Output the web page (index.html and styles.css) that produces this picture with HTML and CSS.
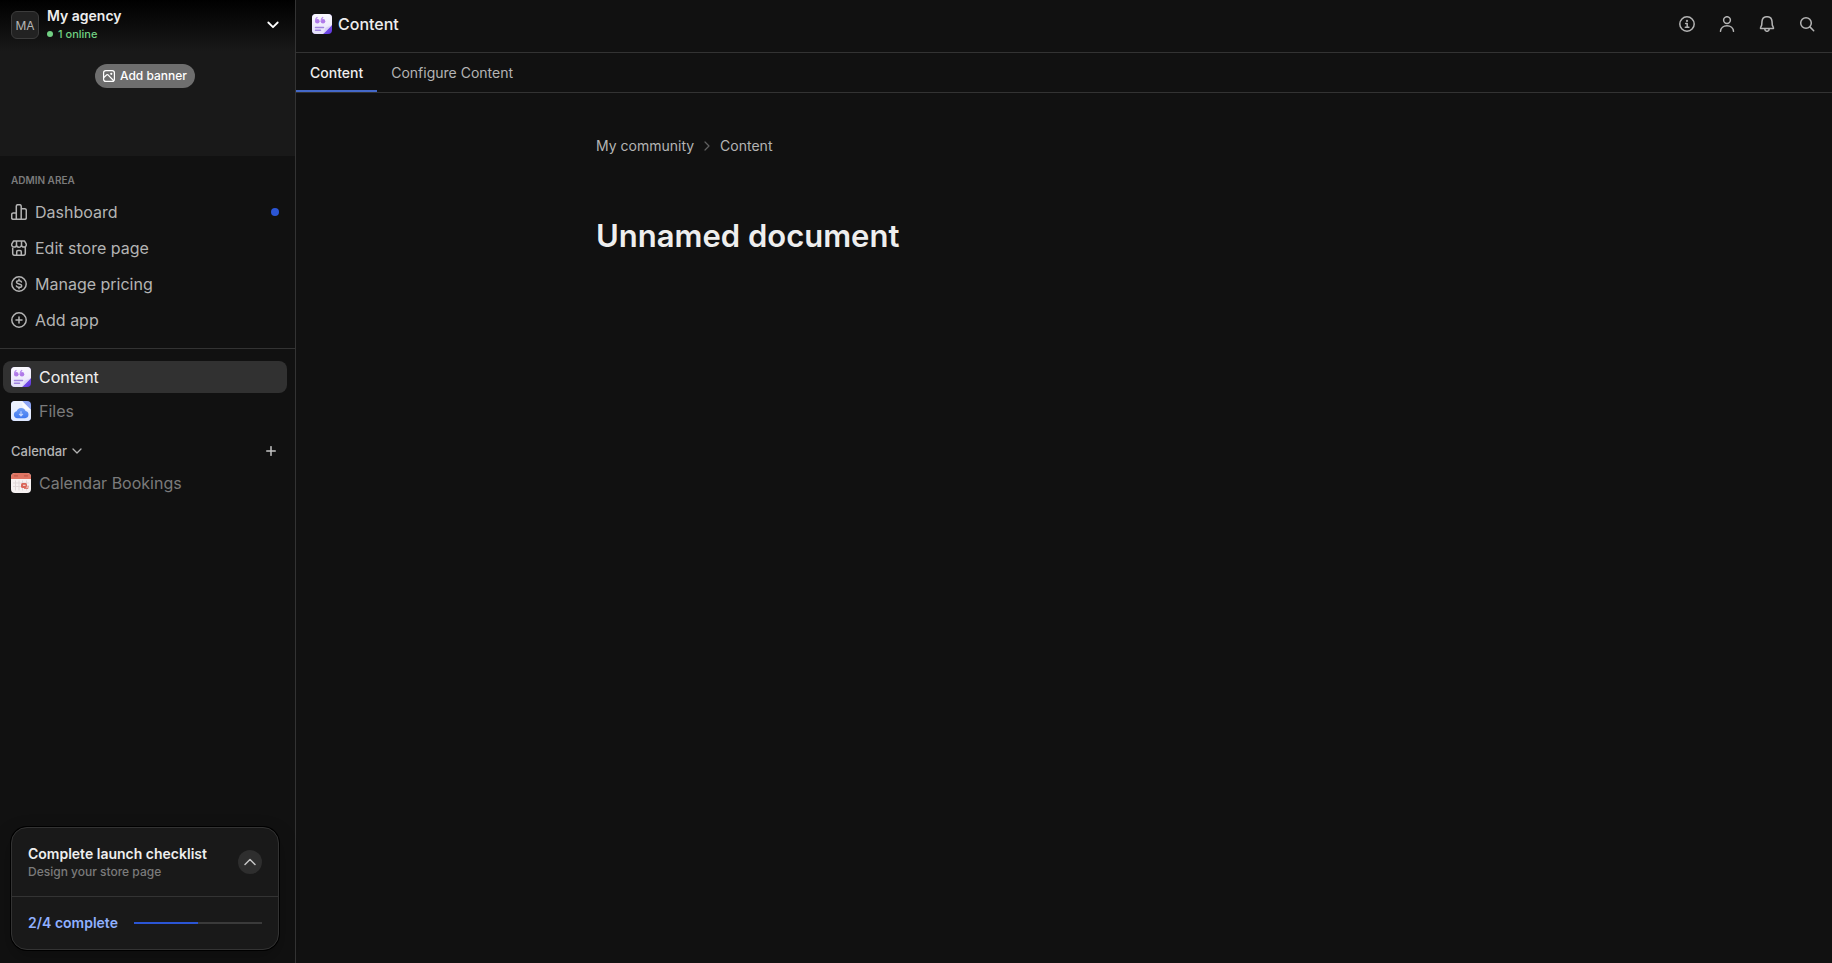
FILE: index.html
```html
<!DOCTYPE html>
<html lang="en">
<head>
  <meta charset="UTF-8" />
  <meta name="viewport" content="width=device-width, initial-scale=1.0"/>
  <title>Content | My agency</title>
  <link rel="stylesheet" href="styles.css">
</head>
<body>
  <!-- shared app icons -->
  <svg width="0" height="0" class="defs" aria-hidden="true">
    <defs>
      <linearGradient id="paper" x1="0" y1="0" x2="0" y2="1">
        <stop offset="0" stop-color="#fbfaff"/><stop offset="1" stop-color="#e4e0fa"/>
      </linearGradient>
      <linearGradient id="purple" x1="0" y1="0" x2="1" y2="1">
        <stop offset="0.4" stop-color="#a487f0"/><stop offset="1" stop-color="#5a2fe0"/>
      </linearGradient>
      <linearGradient id="cloud" x1="0" y1="0" x2="0" y2="1">
        <stop offset="0" stop-color="#6f9df5"/><stop offset="1" stop-color="#3f78f0"/>
      </linearGradient>
      <linearGradient id="bluePaper" x1="0" y1="0" x2="0" y2="1">
        <stop offset="0" stop-color="#eef3ff"/><stop offset="1" stop-color="#dfe8ff"/>
      </linearGradient>
      <symbol id="icon-content" viewBox="0 0 20 20">
        <rect width="20" height="20" rx="4" fill="url(#purple)"/>
        <path d="M4 0h12a4 4 0 0 1 4 4v7l-9 9H4a4 4 0 0 1-4-4V4a4 4 0 0 1 4-4z" fill="url(#paper)"/>
        <path d="M20 11l-9 9c1.300-2 1.500-4 2-5.500.8-1.700 4.500-1.500 7-3.500z" fill="#d9d2f7"/>
        <circle cx="5.300" cy="7.200" r="2.300" fill="#b07ae8"/>
        <circle cx="11" cy="7.200" r="2.300" fill="#b07ae8"/>
        <path d="M3.600 7.200c-.2-2 .5-3.200 1.900-3.900M9.300 7.200c-.2-2 .5-3.200 1.900-3.900" fill="none" stroke="#b88aee" stroke-width="1.200"/>
        <path d="M3.500 13.500h8M3.500 16.300h5" stroke="#a082e0" stroke-width="1.500" stroke-linecap="round"/>
      </symbol>
      <symbol id="icon-files" viewBox="0 0 20 20">
        <rect width="20" height="20" rx="4" fill="#8ea6f5"/>
        <path d="M4 0h7l9 9v7a4 4 0 0 1-4 4H4a4 4 0 0 1-4-4V4a4 4 0 0 1 4-4z" fill="url(#bluePaper)"/>
        <path d="M11 0l9 9c-3 .3-6-.2-7.500-1.700C11 5.800 11.500 3 11 0z" fill="#f8faff"/>
        <path d="M6.300 17.200a3.500 3.500 0 0 1-.7-6.900 4.800 4.800 0 0 1 9-.4 3.700 3.700 0 0 1-.5 7.300z" fill="url(#cloud)"/>
        <path d="M10 10.300v4.200M8.100 12.900l1.900 2 1.900-2" fill="none" stroke="#c5d7ff" stroke-width="1.100"/>
      </symbol>
      <symbol id="icon-calendar" viewBox="0 0 20 20">
        <rect width="20" height="20" rx="4" fill="#f7f2f2"/>
        <path d="M4 0h12a4 4 0 0 1 4 4v2H0V4a4 4 0 0 1 4-4z" fill="#df7563"/>
        <path d="M3.500 2.800h3M13.500 2.800h3" stroke="#c25a4b" stroke-width="1.300" stroke-linecap="round"/>
        <path d="M2 10h16M2 13.500h16M4.500 7.500v10M8 7.500v10M11.500 7.500v10M15.500 7.500v10" stroke="#e2d9da" stroke-width="1"/>
        <rect x="10" y="10" width="6" height="5" rx="1.500" fill="#d96558"/>
        <path d="M12 12.300h2.500M13.500 15.500h2.800v-2.500" stroke="#f7e4e1" stroke-width="1" fill="none"/>
        <path d="M13 15.500h4v-3" stroke="#d96558" stroke-width=".8" fill="none"/>
      </symbol>
    </defs>
  </svg>

  <div class="app">
    <aside class="sidebar">
      <div class="banner">
        <div class="workspace">
          <div class="avatar">MA</div>
          <div class="workspace-info">
            <div class="workspace-name">My agency</div>
            <div class="online"><span class="online-dot"></span>1 online</div>
          </div>
          <button class="icon-button workspace-toggle" aria-label="Switch workspace">
            <svg width="12" height="8" viewBox="0 0 12 8" fill="none" stroke="#fff" stroke-width="1.800" stroke-linecap="round" stroke-linejoin="round"><path d="M1.300 1.500L6 6.200l4.700-4.700"/></svg>
          </button>
        </div>
        <button class="add-banner">
          <svg width="12" height="12" viewBox="0 0 12 12" fill="none" stroke="#fff" stroke-width="1.200" stroke-linecap="round" stroke-linejoin="round"><rect x=".6" y=".6" width="10.800" height="10.800" rx="2.200"/><path d="M.8 7.500l3-2.700c.4-.3.800-.3 1.200 0l5.500 5.700"/><circle cx="8.300" cy="3.800" r=".5" fill="#fff"/></svg>
          Add banner
        </button>
      </div>

      <nav class="admin-nav">
        <h2 class="nav-heading">ADMIN AREA</h2>
        <a class="admin-link" href="#">
          <svg class="line-icon" viewBox="0 0 16 16"><path d="M5.300 15.300V2.200c0-.9.600-1.500 1.500-1.500h1.900c.9 0 1.500.6 1.500 1.500v13.100M5.300 8.900H2.200c-.9 0-1.500.6-1.500 1.500v3.400c0 .9.600 1.500 1.500 1.500h11.600c.9 0 1.500-.6 1.500-1.500V6.300c0-.9-.6-1.500-1.500-1.500h-3.600"/></svg>
          <span>Dashboard</span>
          <span class="notice-dot"></span>
        </a>
        <a class="admin-link" href="#">
          <svg class="line-icon" viewBox="0 0 16 16"><path d="M1.700 6.600v6.900c0 1 .8 1.800 1.800 1.800h9c1 0 1.800-.8 1.800-1.800V6.600M2.600.9h10.800l1.900 3.300v.5a2.400 2.400 0 0 1-4.800 0 2.450 2.450 0 0 1-5 0 2.400 2.400 0 0 1-4.800 0v-.5zM5.500 4.700V1M10.500 4.700V1M5.700 15.200v-3.500c0-.7.500-1.200 1.200-1.200h2.200c.7 0 1.200.5 1.200 1.200v3.500"/></svg>
          <span>Edit store page</span>
        </a>
        <a class="admin-link" href="#">
          <svg class="line-icon" viewBox="0 0 16 16"><circle cx="8" cy="8" r="7.200"/><path d="M10.500 5.900c-.3-.8-1-1.200-2-1.200h-1c-1.200 0-2 .6-2 1.600 0 2.300 5.200 1.100 5.200 3.400 0 1-.8 1.600-2 1.600H7.500c-1.100 0-1.800-.5-2.100-1.300M8 3.300v1.400M8 11.300v1.400"/></svg>
          <span>Manage pricing</span>
        </a>
        <a class="admin-link" href="#">
          <svg class="line-icon" viewBox="0 0 16 16"><circle cx="8" cy="8" r="7.200"/><path d="M8 5v6M5 8h6"/></svg>
          <span>Add app</span>
        </a>
      </nav>

      <nav class="app-nav">
        <a class="app-link active" href="#"><svg class="app-icon"><use href="#icon-content"/></svg>Content</a>
        <a class="app-link" href="#"><svg class="app-icon"><use href="#icon-files"/></svg>Files</a>
        <div class="group-header">
          <button class="group-toggle">
            Calendar
            <svg width="10" height="6" viewBox="0 0 10 6" fill="none" stroke="currentColor" stroke-width="1.300" stroke-linecap="round" stroke-linejoin="round"><path d="M1 1l4 4 4-4"/></svg>
          </button>
          <button class="icon-button group-add" aria-label="Add to Calendar">
            <svg width="10" height="10" viewBox="0 0 10 10" stroke="currentColor" stroke-width="1.500" stroke-linecap="round"><path d="M5 .7v8.600M.7 5h8.600"/></svg>
          </button>
        </div>
        <a class="app-link" href="#"><svg class="app-icon"><use href="#icon-calendar"/></svg>Calendar Bookings</a>
      </nav>

      <section class="checklist">
        <div class="checklist-top">
          <div>
            <h2 class="checklist-title">Complete launch checklist</h2>
            <p class="checklist-step">Design your store page</p>
          </div>
          <button class="checklist-toggle" aria-label="Expand checklist">
            <svg width="12" height="8" viewBox="0 0 12 8" fill="none" stroke="#c4c4c4" stroke-width="1.500" stroke-linecap="round" stroke-linejoin="round"><path d="M1 6.500l5-5 5 5"/></svg>
          </button>
        </div>
        <div class="checklist-bottom">
          <span class="checklist-count">2/4 complete</span>
          <div class="progress"><div class="progress-bar" style="width: 50%"></div></div>
        </div>
      </section>
    </aside>

    <main class="main">
      <header class="topbar">
        <svg class="app-icon"><use href="#icon-content"/></svg>
        <span class="topbar-title">Content</span>
        <div class="topbar-actions">
          <button class="icon-button" aria-label="Info">
            <svg class="line-icon" viewBox="0 0 16 16"><circle cx="8" cy="8" r="7.200"/><path d="M6.600 7.400h1.600v3.700M6.300 11.200h3.600"/><circle cx="8" cy="4.900" r=".4" fill="currentColor"/></svg>
          </button>
          <button class="icon-button" aria-label="Profile">
            <svg class="line-icon" viewBox="0 0 16 16"><circle cx="8" cy="4.100" r="3.400"/><path d="M1.500 15.300c.2-3.400 2.900-5.600 6.500-5.600s6.300 2.200 6.500 5.600"/></svg>
          </button>
          <button class="icon-button" aria-label="Notifications">
            <svg class="line-icon" viewBox="0 0 16 16"><path d="M8 .7c-2.900 0-4.800 2-5 4.700l-.3 3.700-1.100 2.400c-.3.600 0 1.100.6 1.100h11.600c.6 0 .9-.5.6-1.100l-1.100-2.400-.3-3.700C12.800 2.700 10.900.7 8 .7zM5.700 12.800c.2 1.500 1.100 2.500 2.300 2.500s2.100-1 2.300-2.500"/></svg>
          </button>
          <button class="icon-button" aria-label="Search">
            <svg class="line-icon" viewBox="0 0 16 16"><circle cx="7" cy="7" r="5.300"/><path d="M10.900 10.900l3.800 3.800"/></svg>
          </button>
        </div>
      </header>

      <nav class="tabs">
        <a class="tab active" href="#">Content</a>
        <a class="tab" href="#">Configure Content</a>
      </nav>

      <article class="document">
        <nav class="breadcrumb" aria-label="Breadcrumb">
          <a href="#">My community</a>
          <svg width="6" height="10" viewBox="0 0 6 10" fill="none" stroke="#606060" stroke-width="1.200" stroke-linecap="round" stroke-linejoin="round"><path d="M1 1l4 4-4 4"/></svg>
          <a href="#">Content</a>
        </nav>
        <h1>Unnamed document</h1>
      </article>
    </main>
  </div>
</body>
</html>
```

FILE: styles.css
```css
* {
  box-sizing: border-box;
}

body {
  margin: 0;
  font-family: Inter, "Liberation Sans", sans-serif;
  font-size: 16px;
  color: #eee;
  background-color: #111;
}

h1, h2, p {
  margin: 0;
}

a {
  color: inherit;
  text-decoration: none;
}

button {
  padding: 0;
  border: none;
  background: none;
  color: inherit;
  font: inherit;
  cursor: pointer;
}

.defs {
  position: absolute;
}

.app {
  display: flex;
  min-height: 100vh;
}

/* Sidebar */
.sidebar {
  display: flex;
  flex-direction: column;
  flex: none;
  width: 296px;
  border-right: 1px solid #333;
}

.banner {
  display: flex;
  flex-direction: column;
  align-items: center;
  padding: 0 5px 68px 0;
  background: linear-gradient(#000, #191919 52px);
}

.workspace {
  display: flex;
  align-items: center;
  align-self: stretch;
  gap: 8px;
  height: 50px;
  margin-bottom: 14px;
  padding: 0 11px;
}

.avatar {
  display: flex;
  align-items: center;
  justify-content: center;
  width: 28px;
  height: 28px;
  border: 1px solid #3c3c3c;
  border-radius: 6px;
  background-color: #222;
  color: #b4b4b4;
  font-size: 12px;
}

.workspace-name {
  font-size: 14px;
  font-weight: 600;
  line-height: 18px;
}

.online {
  display: flex;
  align-items: center;
  gap: 5px;
  color: #71d083;
  font-size: 11px;
  font-weight: 500;
  line-height: 18px;
}

.online-dot {
  width: 6px;
  height: 6px;
  border-radius: 50%;
  background-color: #71d083;
}

.icon-button {
  display: flex;
  align-items: center;
  justify-content: center;
}

.workspace-toggle {
  margin-left: auto;
}

.add-banner {
  display: flex;
  align-items: center;
  gap: 5px;
  height: 24px;
  padding: 0 8px;
  border-radius: 12px;
  background-color: #6e6e6e;
  color: #fff;
  font-size: 12px;
  font-weight: 500;
  line-height: 16px;
}

.admin-nav {
  padding: 16px 16px 10px 11px;
  border-bottom: 1px solid #333;
}

.nav-heading {
  color: #7b7b7b;
  font-size: 10px;
  font-weight: 600;
  line-height: 16px;
  margin-bottom: 6px;
}

.admin-link {
  display: flex;
  align-items: center;
  gap: 8px;
  height: 36px;
  color: #b4b4b4;
}

.line-icon {
  width: 16px;
  height: 16px;
  fill: none;
  stroke: currentColor;
  stroke-width: 1.5;
  stroke-linecap: round;
  stroke-linejoin: round;
}

.notice-dot {
  width: 8px;
  height: 8px;
  margin-left: auto;
  border-radius: 50%;
  background-color: #2b55d4;
}

.app-nav {
  display: flex;
  flex-direction: column;
  gap: 2px;
  padding: 12px 8px 0 3px;
}

.app-link {
  display: flex;
  align-items: center;
  gap: 8px;
  height: 32px;
  padding: 0 8px;
  border-radius: 8px;
  color: #7b7b7b;
}

.app-link.active {
  background-color: #313131;
  color: #eee;
}

.app-icon {
  flex: none;
  width: 20px;
  height: 20px;
}

.group-header {
  display: flex;
  align-items: center;
  justify-content: space-between;
  height: 20px;
  margin: 12px 0 4px;
  padding: 0 11px 0 8px;
}

.group-toggle {
  display: flex;
  align-items: center;
  gap: 5px;
  color: #b4b4b4;
  font-size: 13px;
  font-weight: 500;
}

.group-add {
  color: #c4c4c4;
}

.checklist {
  margin: auto 16px 13px 11px;
  border: 1px solid #333;
  border-radius: 16px;
  background-color: #191919;
  box-shadow: 0 0 0 1px #000, 0 8px 20px rgba(0, 0, 0, 0.25);
}

.checklist-top {
  display: flex;
  align-items: center;
  justify-content: space-between;
  padding: 16px;
  border-bottom: 1px solid #333;
}

.checklist-title {
  font-size: 14px;
  font-weight: 600;
  line-height: 20px;
}

.checklist-step {
  color: #7b7b7b;
  font-size: 12px;
  font-weight: 500;
  line-height: 16px;
}

.checklist-toggle {
  display: flex;
  align-items: center;
  justify-content: center;
  width: 24px;
  height: 24px;
  border-radius: 50%;
  background-color: #2e2e2e;
}

.checklist-bottom {
  display: flex;
  align-items: center;
  gap: 16px;
  padding: 16px;
  line-height: 20px;
}

.checklist-count {
  color: #8fb0ff;
  font-size: 14px;
  font-weight: 600;
}

.progress {
  flex: 1;
  height: 2px;
  background-color: #3a3a3a;
}

.progress-bar {
  height: 2px;
  background-color: #2b55d4;
}

/* Main area */
.main {
  flex: 1;
  min-width: 0;
}

.topbar {
  display: flex;
  align-items: center;
  gap: 6px;
  height: 53px;
  padding: 0 17px 4px 16px;
  border-bottom: 1px solid #333;
}

.topbar-title {
  font-size: 16px;
  font-weight: 500;
}

.topbar-actions {
  display: flex;
  gap: 24px;
  margin-left: auto;
  color: #b4b4b4;
}

.tabs {
  display: flex;
  height: 40px;
  border-bottom: 1px solid #333;
  font-size: 14px;
}

.tab {
  display: flex;
  align-items: center;
  padding: 0 14px;
  border-top: 2px solid transparent;
  border-bottom: 2px solid transparent;
  color: #b4b4b4;
}

.tab.active {
  border-bottom-color: #4468c8;
  color: #eee;
  font-weight: 500;
}

.document {
  max-width: 1000px;
  margin: 0 auto;
  padding: 43px 32px;
}

.breadcrumb {
  display: flex;
  align-items: center;
  gap: 10px;
  color: #b4b4b4;
  font-size: 14px;
  line-height: 20px;
}

h1 {
  margin-top: 60px;
  font-size: 31px;
  font-weight: 600;
  line-height: 40px;
}
```
